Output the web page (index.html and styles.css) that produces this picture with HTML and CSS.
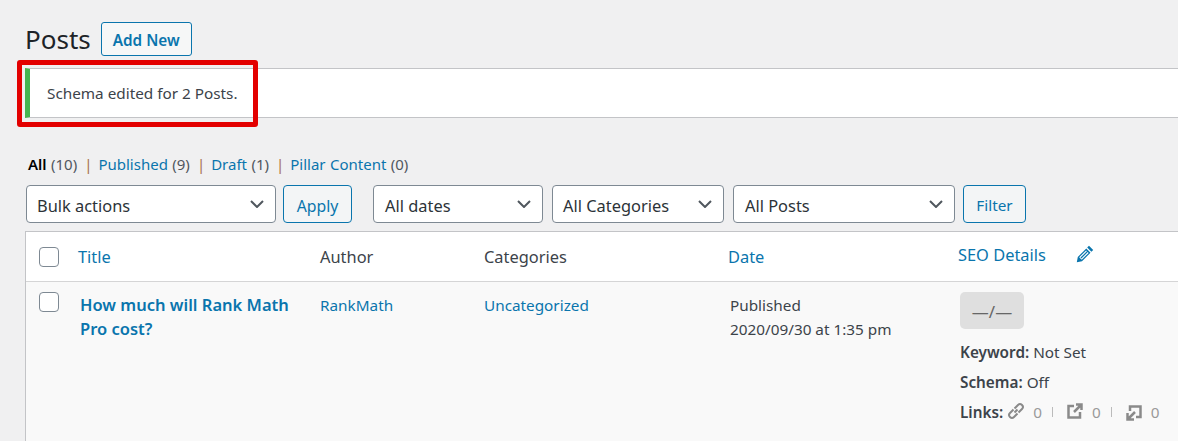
FILE: index.html
```html
<!DOCTYPE html>
<html lang="en">
<head>
    <meta charset="UTF-8">
    <title>Posts</title>
    <link rel="stylesheet" href="styles.css">
</head>
<body>
    <div class="wrap">
        <div class="heading">
            <h1>Posts</h1>
            <a class="add-new" href="#">Add New</a>
        </div>

        <div class="notice">
            <p>Schema edited for 2 Posts.</p>
            <div class="highlight"></div>
        </div>

        <ul class="views">
            <li><b>All</b> <span class="count">(10)</span></li>
            <li class="sep">|</li>
            <li><a href="#">Published</a> <span class="count">(9)</span></li>
            <li class="sep">|</li>
            <li><a href="#">Draft</a> <span class="count">(1)</span></li>
            <li class="sep">|</li>
            <li><a href="#">Pillar Content</a> <span class="count">(0)</span></li>
        </ul>

        <div class="filters">
            <div class="select w-bulk"><span>Bulk actions</span><svg class="chev" viewBox="0 0 14 8"><path d="M1 1l6 6 6-6"/></svg></div>
            <button class="btn btn-apply">Apply</button>
            <div class="select w-dates"><span>All dates</span><svg class="chev" viewBox="0 0 14 8"><path d="M1 1l6 6 6-6"/></svg></div>
            <div class="select w-cats"><span>All Categories</span><svg class="chev" viewBox="0 0 14 8"><path d="M1 1l6 6 6-6"/></svg></div>
            <div class="select w-posts"><span>All Posts</span><svg class="chev" viewBox="0 0 14 8"><path d="M1 1l6 6 6-6"/></svg></div>
            <button class="btn btn-filter">Filter</button>
        </div>

        <div class="posts">
            <div class="row head">
                <div class="col-check"><span class="check"></span></div>
                <div class="col-title"><a href="#">Title</a></div>
                <div class="col-author">Author</div>
                <div class="col-cats">Categories</div>
                <div class="col-date"><a href="#">Date</a></div>
                <div class="col-seo">
                    <a href="#">SEO Details</a>
                    <svg class="pencil" viewBox="0 0 18 18"><path d="M13 .8 17.200 5 15.400 6.800 11.200 2.600zM10.300 3.500 14.500 7.700 6 16.200 .8 17.200l1-5.200zM3.200 12.300l2.500 2.500 6.900-6.900-.8-.8-6.400 6.400-.9-.9 6.400-6.400-.8-.8z" fill-rule="evenodd"/></svg>
                </div>
            </div>
            <div class="row post">
                <div class="col-check"><span class="check"></span></div>
                <div class="col-title"><a class="post-title" href="#">How much will Rank Math Pro cost?</a></div>
                <div class="col-author"><a href="#">RankMath</a></div>
                <div class="col-cats"><a href="#">Uncategorized</a></div>
                <div class="col-date">Published<br>2020/09/30 at 1:35 pm</div>
                <div class="col-seo">
                    <span class="score">—/—</span>
                    <div class="meta"><b>Keyword:</b> Not Set</div>
                    <div class="meta"><b>Schema:</b> Off</div>
                    <div class="meta links">
                        <b>Links:</b>
                        <svg class="link-icon" viewBox="0 0 18 18"><path d="M7.500 10.500l3-3M6.500 7.500 3 11a2.800 2.800 0 0 0 4 4l3.500-3.500M7.500 6.500 11 3a2.800 2.800 0 0 1 4 4l-3.500 3.500"/></svg>
                        <span class="num">0</span><span class="bar"></span>
                        <svg class="link-icon ext" viewBox="0 0 16 16"><path d="M7 3H1.500v11.500H13V9M9 1.500h5.500V7M14.500 1.500 7 9"/></svg>
                        <span class="num">0</span><span class="bar"></span>
                        <svg class="link-icon ext ext-in" viewBox="0 0 16 16"><path d="M4 6V1.500h10.500V12H10M1.500 8v6.500H8M1.500 14.500 9 7"/></svg>
                        <span class="num">0</span>
                    </div>
                </div>
            </div>
        </div>
    </div>
</body>
</html>
```

FILE: styles.css
```css
* {
    margin: 0;
    padding: 0;
    box-sizing: border-box;
}
body {
    height: 441px;
    overflow: hidden;
    background-color: #f0f0f1;
    color: #3c434a;
    font-family: "Noto Sans", sans-serif;
    font-size: 15.300px;
}
a {
    color: #0a75ad;
    text-decoration: none;
}
.wrap {
    width: 1220px;
    padding: 22px 0 0 25px;
}
.heading {
    display: flex;
    align-items: center;
    gap: 10px;
    height: 34px;
}
h1 {
    font-size: 26px;
    font-weight: 400;
    color: #1d2327;
}
.add-new {
    display: flex;
    align-items: center;
    height: 34px;
    padding: 2px 11px 0;
    border: 1px solid #0a75ad;
    border-radius: 3px;
    background-color: #f6f7f7;
    font-size: 15.300px;
    font-weight: 600;
}

.notice {
    position: relative;
    height: 50px;
    margin-top: 12px;
    padding: 0 0 0 17px;
    display: flex;
    align-items: center;
    background-color: #fff;
    border: 1px solid #c3c4c7;
    border-left: 5px solid #46b450;
}
.highlight {
    position: absolute;
    left: -13px;
    top: -9px;
    width: 241px;
    height: 67px;
    border: 5px solid #e30000;
    border-radius: 3px;
}

.views {
    display: flex;
    gap: 7px;
    margin-top: 36px;
    padding-left: 3px;
    height: 20px;
    align-items: center;
    list-style: none;
    font-size: 15px;
    word-spacing: 0.500px;
}
.views b {
    color: #000;
    font-weight: 600;
}
.count {
    color: #50575e;
}
.sep {
    color: #a7714c;
    margin-right: -1px;
}

.filters {
    display: flex;
    margin-top: 11px;
    padding-left: 1px;
    height: 38px;
}
.select {
    display: flex;
    align-items: center;
    justify-content: space-between;
    height: 38px;
    padding: 0 11px 0 10px;
    border: 1px solid #7e8993;
    border-radius: 4px;
    background-color: #fff;
    color: #2c3338;
    font-size: 16.400px;
}
.select span {
    margin-top: 3px;
}
.chev {
    width: 14px;
    height: 8px;
    fill: none;
    stroke: #50575e;
    stroke-width: 2;
}
.w-bulk { width: 250px; }
.w-dates { width: 170px; margin-left: 21px; padding-left: 11px; }
.w-cats { width: 172px; margin-left: 9px; padding-left: 10px; }
.w-posts { width: 222px; margin-left: 9px; padding-left: 11px; }
.btn {
    height: 38px;
    border: 1px solid #0a75ad;
    border-radius: 4px;
    background-color: #f3f5f6;
    color: #0a75ad;
    font-family: inherit;
    padding-top: 3px;
}
.btn-apply { width: 69px; margin-left: 7px; font-size: 15.800px; }
.btn-filter { width: 63px; margin-left: 8px; font-size: 15.300px; padding-top: 1px; }

.posts {
    margin-top: 8px;
    border: 1px solid #c3c4c7;
    background-color: #fff;
}
.row {
    display: flex;
}
.head {
    height: 50px;
    align-items: center;
    border-bottom: 1px solid #d5d5d6;
    font-size: 16.400px;
}
.post {
    background-color: #f9f9f9;
    padding-top: 10px;
    height: 170px;
}
.col-check { width: 52px; padding-left: 13px; }
.col-title { width: 242px; }
.col-author { width: 164px; }
.col-cats { width: 244px; }
.col-date { width: 230px; }
.col-seo { display: flex; }
.head .col-seo { align-items: center; margin-top: -5px; }
.post .col-seo { display: block; padding-left: 2px; }
.post .col-title { padding: 1px 20px 0 2px; }
.post .col-date { padding: 1px 0 0 2px; line-height: 24px; }
.post .col-author, .post .col-cats { padding-top: 3px; }
.check {
    display: block;
    width: 20px;
    height: 20px;
    background-color: #fff;
    border: 1px solid #7e8993;
    border-radius: 4px;
}
.post-title {
    font-size: 16.500px;
    font-weight: 600;
    line-height: 24px;
    display: block;
}
.pencil {
    width: 18px;
    height: 18px;
    margin-left: 30px;
    fill: #0a75ad;
}
.score {
    display: block;
    width: 64px;
    height: 37px;
    line-height: 40px;
    text-align: center;
    background-color: #dfdfdf;
    border-radius: 5px;
    color: #666;
    font-size: 17px;
}
.meta {
    margin-top: 10px;
    height: 20px;
    white-space: nowrap;
}
.meta:nth-of-type(1) {
    margin-top: 13px;
}
.meta b {
    font-weight: 600;
}
.links {
    display: flex;
    align-items: center;
}
.link-icon {
    width: 18px;
    height: 18px;
    margin-left: 4px;
    margin-top: -2px;
    stroke: #8a8a8a;
    stroke-width: 2;
    fill: none;
}
.link-icon.ext {
    width: 16px;
    height: 16px;
    margin-left: 14px;
    margin-top: -3px;
    stroke-width: 2.500;
}
.link-icon.ext-in {
    margin-top: 1px;
}
.ext + .num {
    margin-left: 9px;
}
.num {
    margin-left: 8px;
    color: #999;
}
.bar {
    width: 1px;
    height: 10px;
    margin-left: 10px;
    background-color: #bbb;
}
```
